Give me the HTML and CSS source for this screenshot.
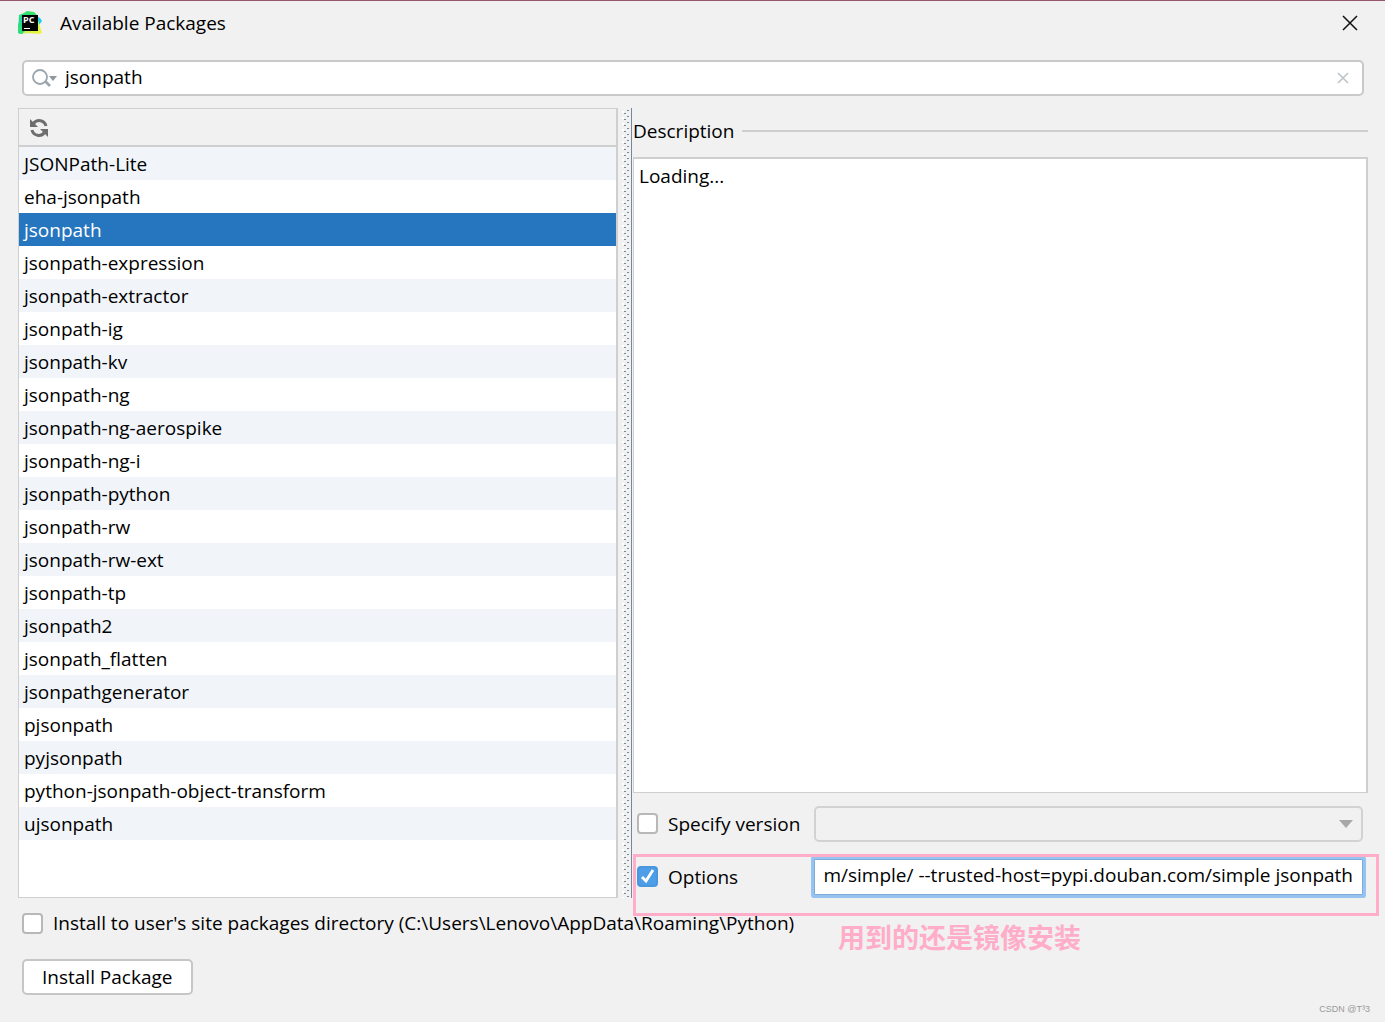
FILE: index.html
```html
<!DOCTYPE html>
<html lang="en">
<head>
<meta charset="utf-8">
<meta name="viewport" content="width=device-width, initial-scale=1">
<title>Available Packages</title>
<link rel="stylesheet" href="styles.css">
</head>
<body>
<div class="window">
  <header class="titlebar">
    <svg class="logo" viewBox="0 0 24 24" aria-hidden="true">
      <defs>
        <linearGradient id="green" x1="0" y1="1" x2="1" y2="0"><stop offset="0" stop-color="#19c8ab"/><stop offset=".5" stop-color="#2be07c"/><stop offset="1" stop-color="#3fe35d"/></linearGradient>
        <linearGradient id="yellow" x1="0" y1="0" x2="1" y2="1"><stop offset="0" stop-color="#a5ee55"/><stop offset="1" stop-color="#f5f53c"/></linearGradient>
      </defs>
      <path fill="url(#green)" d="M1 4l5-2 3-2 7 1 3 3-3 14-9 2-3 3-4-1z"/>
      <path fill="#17cdf0" d="M18 5l4 2 2 3-3 4-4-1z"/>
      <path fill="url(#yellow)" d="M6 18l14-9 4 13-3 1-12-1-4 1z"/>
      <path fill="#2be07c" d="M0 12l7 8-4 3-3-1z"/>
      <path d="M4 4h16v16H4z"/>
      <text class="logo-text" x="5" y="12">PC</text>
      <path fill="#fff" d="M6 17h6v1H6z"/>
    </svg>
    <h1 class="title">Available Packages</h1>
    <button class="close" type="button" aria-label="Close">
      <svg width="16" height="16" viewBox="0 0 16 16" aria-hidden="true"><path d="M1 1l14 14M15 1L1 15" stroke="#111" stroke-width="1.5"/></svg>
    </button>
  </header>

  <div class="search">
    <svg class="search-icon" width="26" height="20" viewBox="0 0 26 20" aria-hidden="true"><circle cx="8" cy="9" r="7" fill="none" stroke="#9aa5ad" stroke-width="1.8"/><path d="M13 13l5 5" stroke="#9aa5ad" stroke-width="2.6"/><path d="M17 8h8l-4 5z" fill="#8b98a1"/></svg>
    <input class="search-input" type="text" aria-label="Search packages" value="jsonpath">
    <button class="clear" type="button" aria-label="Clear search">
      <svg width="12" height="12" viewBox="0 0 12 12" aria-hidden="true"><path d="M1 1l10 10M11 1L1 11" stroke="#c0c5c9" stroke-width="1.7"/></svg>
    </button>
  </div>

  <main class="panes">
    <section class="packages" aria-label="Packages">
      <div class="toolbar">
        <button class="refresh" type="button" aria-label="Reload list of packages">
          <svg width="20" height="20" viewBox="0 0 20 20" aria-hidden="true"><g fill="none" stroke="#6e6e6e" stroke-width="3"><path d="M4.500 5.500A7 7 0 0 1 17 8"/><path d="M15.500 14.500A7 7 0 0 1 3 12"/></g><path fill="#6e6e6e" d="M1 1v8h8zM19 19v-8h-8z"/></svg>
        </button>
      </div>
      <ul class="list" role="listbox" aria-label="Package names">
        <li class="row" role="option">JSONPath-Lite</li>
        <li class="row" role="option">eha-jsonpath</li>
        <li class="row selected" role="option" aria-selected="true">jsonpath</li>
        <li class="row" role="option">jsonpath-expression</li>
        <li class="row" role="option">jsonpath-extractor</li>
        <li class="row" role="option">jsonpath-ig</li>
        <li class="row" role="option">jsonpath-kv</li>
        <li class="row" role="option">jsonpath-ng</li>
        <li class="row" role="option">jsonpath-ng-aerospike</li>
        <li class="row" role="option">jsonpath-ng-i</li>
        <li class="row" role="option">jsonpath-python</li>
        <li class="row" role="option">jsonpath-rw</li>
        <li class="row" role="option">jsonpath-rw-ext</li>
        <li class="row" role="option">jsonpath-tp</li>
        <li class="row" role="option">jsonpath2</li>
        <li class="row" role="option">jsonpath_flatten</li>
        <li class="row" role="option">jsonpathgenerator</li>
        <li class="row" role="option">pjsonpath</li>
        <li class="row" role="option">pyjsonpath</li>
        <li class="row" role="option">python-jsonpath-object-transform</li>
        <li class="row" role="option">ujsonpath</li>
      </ul>
    </section>
    <div class="splitter" role="separator" aria-orientation="vertical"></div>
    <section class="details">
      <h2 class="heading">Description</h2>
      <div class="description">Loading...</div>
      <div class="option">
        <input class="check" type="checkbox" id="specify">
        <label class="option-label" for="specify">Specify version</label>
        <select class="version" aria-label="Version" disabled><option></option></select>
      </div>
      <div class="option">
        <input class="check" type="checkbox" id="options" checked>
        <label class="option-label" for="options">Options</label>
        <input class="options-input" type="text" aria-label="Install options" value="http://pypi.douban.com/simple/ --trusted-host=pypi.douban.com/simple jsonpath">
        <div class="mark"><span class="note" lang="zh-CN">用到的还是镜像安装</span></div>
      </div>
    </section>
  </main>

  <footer class="footer">
    <div class="site">
      <input class="check" type="checkbox" id="site">
      <label for="site">Install to user's site packages directory (C:\Users\Lenovo\AppData\Roaming\Python)</label>
    </div>
    <button class="install" type="button">Install Package</button>
  </footer>
  <small class="credit">CSDN @T³3</small>
</div>
</body>
</html>
```

FILE: styles.css
```css
* {
  box-sizing: border-box;
}

body {
  margin: 0;
  background: #f1f1f1;
  color: #000;
  font: 19px/24px "Open Sans", "Noto Sans CJK SC", sans-serif;
}

button,
input,
select {
  margin: 0;
  font: inherit;
  color: inherit;
}

.window {
  position: relative;
  display: flex;
  flex-direction: column;
  min-height: 100vh;
  padding: 0 17px 27px 18px;
  border-top: 1px solid #96596a;
}

.titlebar {
  display: flex;
  align-items: center;
  height: 44px;
}

.logo {
  width: 24px;
  height: 24px;
}

.logo-text {
  fill: #fff;
  font: bold 9px "Open Sans", sans-serif;
}

.title {
  flex: 1;
  margin: 0 0 0 18px;
  font-size: 19px;
  font-weight: 400;
}

.close,
.clear,
.refresh {
  display: flex;
  padding: 0;
  border: 0;
  background: none;
}

.close {
  margin-right: 10px;
}

.search {
  display: flex;
  align-items: center;
  height: 36px;
  margin: 15px 4px 12px;
  padding: 0 13px 0 8px;
  border: 2px solid #c9c9c9;
  border-radius: 5px;
  background: #fff;
}

.search-input {
  flex: 1;
  min-width: 0;
  padding: 0 0 2px 7px;
  border: 0;
  outline: 0;
  background: none;
}

.panes {
  flex: 1;
  display: grid;
  grid-template-columns: minmax(0, 600fr) 15px minmax(0, 735fr);
}

.packages {
  display: flex;
  flex-direction: column;
  border: 1px solid #cfcfcf;
  border-right-width: 2px;
  background: #fff;
}

.toolbar {
  display: flex;
  align-items: center;
  height: 38px;
  padding: 2px 0 0 10px;
  border-bottom: 2px solid #cfcfcf;
  background: #f1f1f1;
}

.list {
  margin: 0;
  padding: 0;
  list-style: none;
}

.row {
  height: 33px;
  padding-left: 5px;
  line-height: 34px;
}

.row:nth-child(odd) {
  background: #f1f5fa;
}

.row.selected {
  background: #2675bf;
  color: #fff;
}

.splitter {
  margin-right: 1px;
  border-right: 1px solid #76889b;
  background:
    linear-gradient(#76889b 1px, transparent 1px) 6px 5px / 2px 6px repeat-y,
    linear-gradient(#fff 2px, transparent 2px) 4px 3px / 2px 6px repeat-y,
    linear-gradient(#76889b 1px, transparent 1px) 9px 8px / 2px 6px repeat-y;
}

.details {
  display: flex;
  flex-direction: column;
}

.heading {
  display: flex;
  align-items: center;
  gap: 8px;
  height: 49px;
  margin: 0;
  padding-bottom: 4px;
  font-size: 19px;
  font-weight: 400;
}

.heading::after {
  content: "";
  flex: 1;
  height: 2px;
  background: #cfcfcf;
}

.description {
  flex: 1;
  margin-bottom: 12px;
  padding: 5px;
  border: 1px solid #cfcfcf;
  border-width: 2px 2px 1px 1px;
  background: #fff;
}

.option {
  position: relative;
  display: flex;
  align-items: center;
  height: 37px;
  padding: 0 5px 0 4px;
}

.option + .option {
  margin: 16px 0 3px;
}

.option-label {
  width: 146px;
  margin-left: 10px;
}

.check {
  appearance: none;
  flex: none;
  width: 21px;
  height: 21px;
  border: 2px solid #b8b8b8;
  border-radius: 4px;
  background: #fff;
}

.check:checked {
  border-color: #4b97de;
  background: #4e9de7 url("data:image/svg+xml,%3Csvg xmlns='http://www.w3.org/2000/svg' viewBox='0 0 17 17'%3E%3Cpath d='M3 9l4 4 7-11' fill='none' stroke='white' stroke-width='2.800'/%3E%3C/svg%3E");
}

.version {
  appearance: none;
  flex: 1;
  min-width: 0;
  height: 36px;
  border: 2px solid #d2d2d2;
  border-radius: 5px;
  opacity: 1;
  background: #f1f1f1 url("data:image/svg+xml,%3Csvg xmlns='http://www.w3.org/2000/svg' width='14' height='8'%3E%3Cpath d='M0 0h14L7 8z' fill='%23a8a8a8'/%3E%3C/svg%3E") right 8px center no-repeat;
}

.options-input {
  flex: 1;
  min-width: 0;
  height: 36px;
  padding: 0 9px 3px 8px;
  border: 1px solid #7fabd8;
  border-radius: 1px;
  outline: 0;
  background: #fff;
  box-shadow: 0 0 0 3px #97c3f3;
  /* keeps the end of a long command line in view */
  direction: rtl;
}

.mark {
  position: absolute;
  inset: -4px -11px -21px 0;
  border: 3px solid #ffadc8;
  color: #ffadc8;
  pointer-events: none;
}

.note {
  position: absolute;
  top: 100%;
  left: 202px;
  font: 700 27px/48px "Noto Sans CJK SC", sans-serif;
  white-space: nowrap;
}

.footer {
  display: flex;
  flex-direction: column;
  align-items: flex-start;
  gap: 24px;
  padding: 13px 4px 0;
}

.site {
  display: flex;
  align-items: center;
  gap: 10px;
}

.install {
  height: 36px;
  padding: 0 18px;
  border: 2px solid #c6c6c6;
  border-radius: 5px;
  background: #fff;
}

.credit {
  position: absolute;
  right: 15px;
  bottom: 7px;
  color: #999;
  font: 9px/12px "Liberation Sans", sans-serif;
}
```
